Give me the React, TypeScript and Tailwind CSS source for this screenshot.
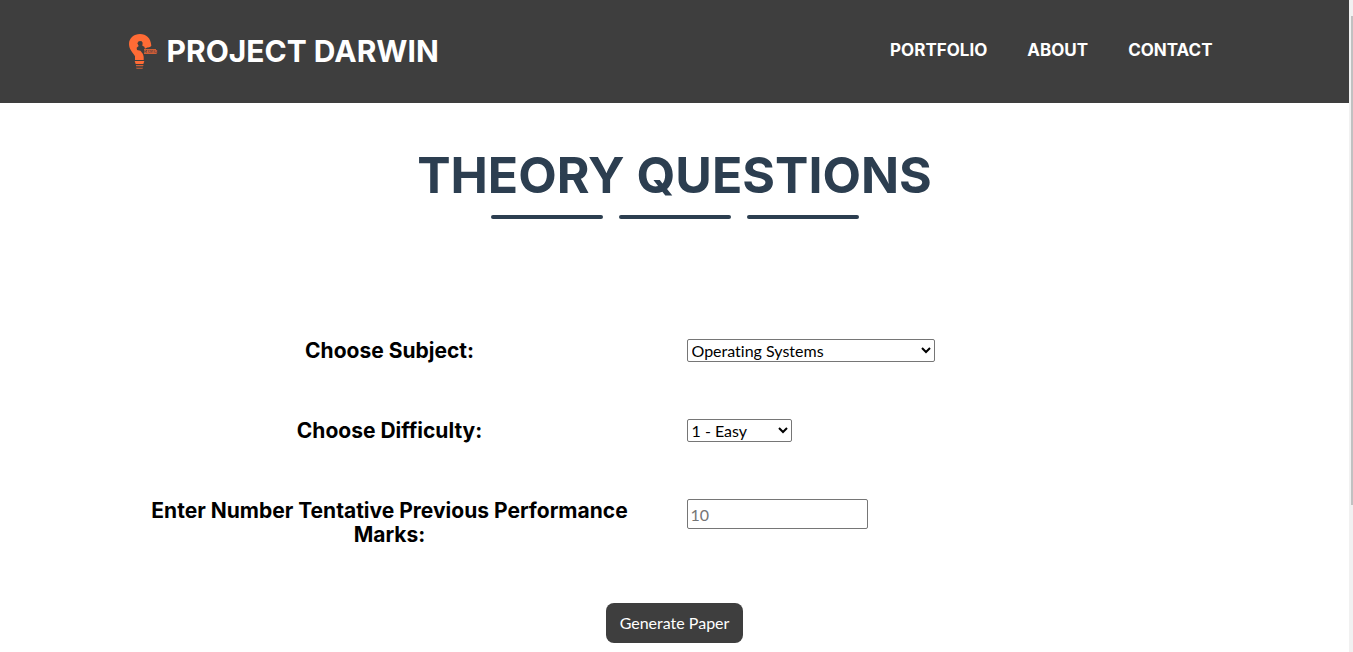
import React from "react";

const links = ["Portfolio", "About", "Contact"];

function Logo() {
  return (
    <svg viewBox="57 39 90 111" className="h-[37px] w-[30px]" fill="#ff6b35" aria-hidden="true">
      <path d="M75 120 L75 109 C70 98 57 90 57 72 C57 54 72 42 90 42 C109 42 122 54 124 77 C119 84 110 80 105 87 L103 80 L97 77 L98 68 L94 63 L86 64 L82 70 L86 78 L80 83 L81 90 L91 92 C97 99 103 104 101 120 Z" />
      <path d="M74 123 H103 L100 132 H77 Z" />
      <path d="M78 135 H100 V138 H78 Z M78 140 H99 V142 H78 Z M79 144 H98 V146 H79 Z" opacity="0.75" />
      <path d="M102 87 H138 V89 H102 Z M102 100 H140 V102 H102 Z" />
      <text x="102" y="99" fontSize="9" fontWeight="700" fontFamily="Liberation Sans, sans-serif">DANGER</text>
    </svg>
  );
}

export default function App() {
  return (
    <div className="flex min-h-screen bg-white font-['Lato',sans-serif] text-base text-black [font-variant-ligatures:no-common-ligatures]">
      <div className="min-w-0 flex-1">
        <header className="bg-[#3e3e3e] py-8 font-['Inter',sans-serif] text-white">
          <div className="mx-auto flex max-w-[1140px] items-center justify-between pr-4 pl-6">
            <a href="#" className="flex h-[39px] items-center gap-2 text-[30px] font-bold uppercase">
              <Logo />
              Project Darwin
            </a>
            <nav className="flex gap-2 pb-1">
              {links.map((l) => (
                <a key={l} href={"#" + l.toLowerCase()} className="px-4 text-[17px] leading-6 font-bold uppercase">
                  {l}
                </a>
              ))}
            </nav>
          </div>
        </header>
        <main className="mx-auto max-w-[1140px] px-3 pt-12 pb-2">
          <h1 className="text-center font-['Inter',sans-serif] text-[50px] leading-[48px] font-bold text-[#2c3e50] uppercase">
            Theory Questions
          </h1>
          <div className="mt-4 flex justify-center gap-4">
            <span className="h-1 w-28 rounded-full bg-[#2c3e50]" />
            <span className="h-1 w-28 rounded-full bg-[#2c3e50]" />
            <span className="h-1 w-28 rounded-full bg-[#2c3e50]" />
          </div>
          <form className="mt-[120px]" onSubmit={(e) => e.preventDefault()}>
            <div className="grid grid-cols-2 gap-x-6 gap-y-14">
              <label htmlFor="subject" className="px-3 text-center font-['Inter',sans-serif] text-[21px] leading-6 font-bold">
                Choose Subject:
              </label>
              <div className="flex items-start">
                <select id="subject" className="h-[23px] w-[248px] rounded-xs border border-[#767676] bg-white">
                  <option>Operating Systems</option>
                </select>
              </div>
              <label htmlFor="difficulty" className="px-3 text-center font-['Inter',sans-serif] text-[21px] leading-6 font-bold">
                Choose Difficulty:
              </label>
              <div className="flex items-start">
                <select id="difficulty" className="h-[23px] w-[105px] rounded-xs border border-[#767676] bg-white">
                  <option>1 - Easy</option>
                </select>
              </div>
              <label htmlFor="marks" className="px-3 text-center font-['Inter',sans-serif] text-[21px] leading-6 font-bold">
                Enter Number Tentative Previous Performance Marks:
              </label>
              <div className="flex items-start">
                <input id="marks" placeholder="10" className="h-[30px] w-[181px] rounded-xs border border-[#767676] bg-white px-[3px] placeholder:text-[#757575]" />
              </div>
            </div>
            <div className="mt-14 flex justify-center">
              <button type="submit" className="h-10 rounded-lg bg-[#3e3e3e] px-[14px] text-white">
                Generate Paper
              </button>
            </div>
          </form>
        </main>
      </div>
      <div className="flex w-1 justify-end bg-[#f1f1f1] pt-4" aria-hidden="true">
        <div className="h-[75vh] w-0.5 bg-[#c1c1c1]" />
      </div>
    </div>
  );
}
